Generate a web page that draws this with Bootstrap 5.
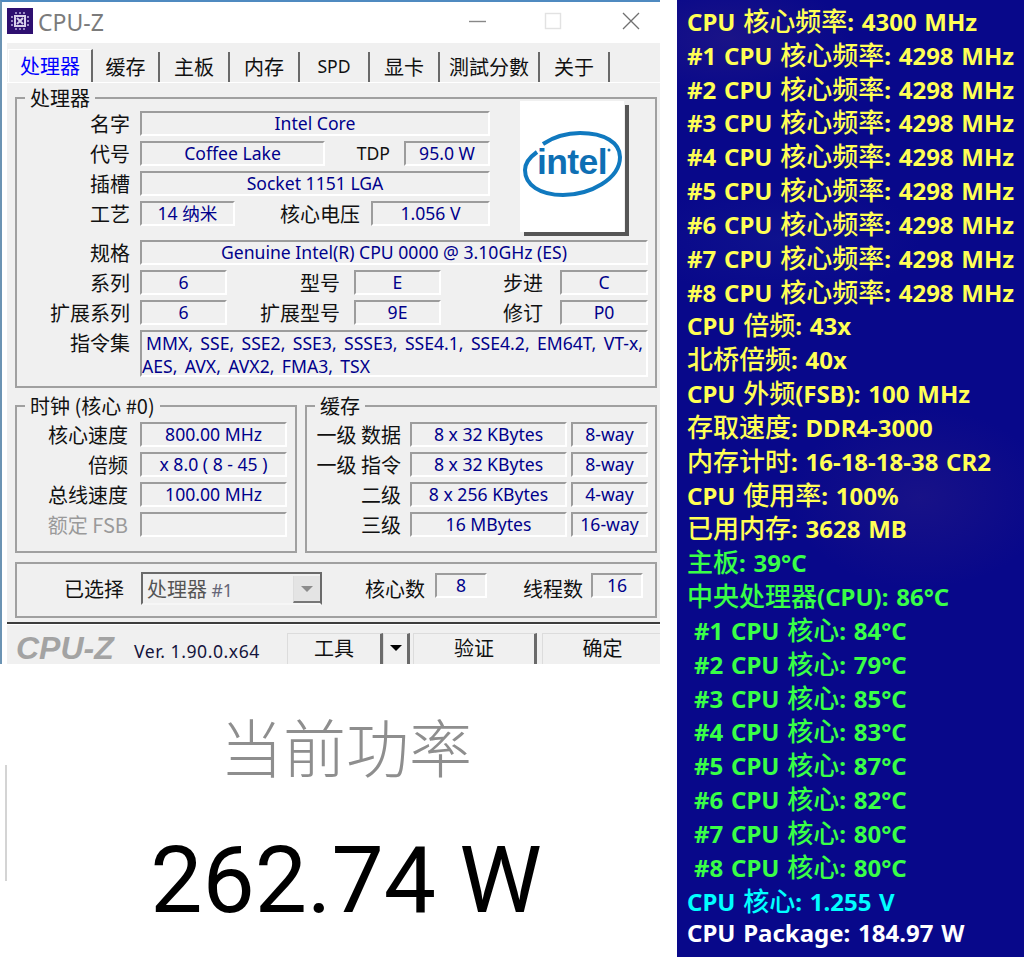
<!DOCTYPE html>
<html lang="zh-CN">
<head>
  <meta charset="UTF-8">
  <meta name="viewport" content="width=device-width, initial-scale=1">
  <title>CPU-Z</title>
  <link href="https://cdn.jsdelivr.net/npm/bootstrap@5.3.0/dist/css/bootstrap.min.css" rel="stylesheet">
  <style>
    html, body { margin: 0; background: #fff; }
    .shot { width: 1024px; height: 957px; overflow: hidden; font-family: "Noto Sans", "Noto Sans CJK SC", sans-serif; }
    .shot-left { width: 660px; flex: none; }
    /* window */
    .cz-win { height: 664px; border-top: 2px solid #4f8ac0; border-left: 2px solid #6b93b3; overflow: hidden; font-size: 17.6px; line-height: 25px; color: #000; }
    .cz-title { height: 41px; padding-left: 5px; }
    .cz-logo { width: 26px; height: 26px; margin-top: 6px; flex: none; }
    .cz-name { font-size: 23px; color: #7b7b7b; margin-left: 5px; padding-top: 2px; line-height: 36px; }
    .cz-ctl { margin-left: auto; }
    .cz-ctl svg { display: block; }
    .cz-tabs { height: 40px; margin-left: 5px; background: #f0f0f0; padding-left: 1px; border-bottom: 1px solid #fff; }
    .cz-tab { height: 30px; margin-top: 9px; border-right: 2px solid #696969; text-align: center; font-size: 20px; line-height: 29px; font-family: "Noto Sans CJK SC", sans-serif; color: #111; }
    .cz-tab-on { height: 33px; margin-top: 6px; width: 85px; background: #f4f4f4; color: #0000ff; border-top: 1px solid #fff; border-left: 1px solid #fff; line-height: 32px; }
    .t2 { width: 67px; } .t3 { width: 70px; } .t4 { width: 70px; } .t5 { width: 70px; } .t6 { width: 70px; } .t7 { width: 100px; } .t8 { width: 70px; }
    .cz-tab.t-latin, .cz-lab.t-latin { font-size: 17.6px; font-family: "Noto Sans", sans-serif; }
    .cz-body { height: 539px; margin-left: 5px; background: #f0f0f0; padding: 14px 3px 0 8px; }
    .cz-grp { position: relative; border: 2px solid #a0a0a0; background: #f0f0f0; }
    .cz-legend { position: absolute; top: -13px; left: 8px; padding: 0 5px; background: #f0f0f0; font-size: 20px; line-height: 24px; white-space: nowrap; font-family: "Noto Sans CJK SC", "Noto Sans", sans-serif; color: #111; }
    .g-proc { height: 291px; padding-top: 2px; }
    .g-top { height: 139px; }
    .g-left { width: 473px; padding-top: 10px; flex: none; }
    .g-logo { margin-left: 30px; flex: none; }
    .g-clock { width: 282px; height: 148px; padding-top: 15px; }
    .g-cache { width: 352px; height: 148px; padding-top: 15px; margin-left: 8px; }
    .g-sel { height: 56px; margin-top: 9px; padding-top: 8px; }
    .g-sel .cz-lab { padding-top: 4px; }
    .g-pair { margin-top: 17px; }
    .cz-row { height: 25px; margin-bottom: 5px; }
    .cz-lab { font-family: "Noto Sans CJK SC", "Noto Sans", sans-serif; font-size: 20px; line-height: 25px; text-align: right; white-space: nowrap; flex: none; color: #111; }
    .cz-off { color: #9a9a9a; }
    .cz-fld { height: 25px; flex: none; border: 2px solid; border-color: #9c9c9c #fff #fff #9c9c9c; color: #00008b; text-align: center; line-height: 21px; white-space: nowrap; font-size: 17.6px; overflow: hidden; }
    .cz-tall { height: 47px; width: 508px; text-align: left; line-height: 23px; word-spacing: 2.8px; text-indent: 4px; }
    /* label and field widths of the processor group */
    .l113 { width: 113px; margin-right: 10px; }
    .f350 { width: 350px; } .f185 { width: 185px; } .f86 { width: 86px; } .f95 { width: 95px; } .f119 { width: 119px; }
    .f508 { width: 508px; } .f87 { width: 87px; } .f88 { width: 88px; }
    .l65 { width: 65px; margin-right: 14px; }
    .l125 { width: 125px; margin-right: 11px; }
    .lm113 { width: 113px; margin-right: 14px; }
    .l102 { width: 102px; margin-right: 17px; }
    /* clock, cache */
    .l111 { width: 111px; margin-right: 12px; }
    .f147 { width: 147px; }
    .l94 { width: 94px; margin-right: 9px; }
    .f157 { width: 157px; } .f77 { width: 77px; margin-left: 4px; }
    /* selection */
    .l107 { width: 107px; margin-right: 17px; }
    .cz-combo { width: 181px; height: 33px; flex: none; border: 2px solid; border-color: #6a6a6a #6a6a6a #f6f6f6 #6a6a6a; padding-left: 4px; font-size: 20px; line-height: 30px; color: #555; position: relative; font-family: "Noto Sans CJK SC", sans-serif; white-space: nowrap; }
    .cz-combo small { font-size: 17.6px; font-family: "Noto Sans", sans-serif; color: #667; }
    .cz-drop { position: absolute; right: 0; top: 2px; width: 27px; height: 27px; border-left: 1px solid #ddd; border-bottom: 2px solid #777; background: #e4e4e4; }
    .cz-tri { width: 0; height: 0; border-style: solid; border-width: 6px 6px 0; }
    .tri-grey { border-color: #8c8c8c transparent transparent; }
    .tri-black { border-color: #000 transparent transparent; }
    .l60a { width: 60px; margin-left: 43px; margin-right: 10px; }
    .l60b { width: 60px; margin-left: 36px; margin-right: 8px; }
    .f52 { width: 52px; margin-top: 1px; }
    /* footer */
    .cz-foot { height: 42px; margin-left: 5px; background: #f0f0f0; border-top: 2px solid #3d3d3d; box-shadow: inset 0 1px 0 #fff; position: relative; overflow: hidden; }
    .cz-brand { flex: none; font-family: "Liberation Sans", sans-serif; font-weight: 700; font-style: italic; font-size: 32px; line-height: 30px; color: #a3a3a3; margin-left: 9px; width: 118px; padding-top: 9px; }
    .cz-ver { flex: none; font-size: 17.6px; color: #14143c; width: 153px; padding-top: 15px; white-space: nowrap; letter-spacing: .55px; }
    .cz-btn { height: 34px; margin-top: 9px; flex: none; background: #f0f0f0; border: 1px solid #dcdcdc; border-right: 3px solid #6a6a6a; text-align: center; font-family: "Noto Sans CJK SC", sans-serif; font-size: 20px; line-height: 28px; color: #111; }
    .b-tool { width: 96px; }
    .b-arrow { width: 27px; margin-right: 3px; }
    .b-ok { width: 124px; margin-right: 5px; }
    .b-end { width: 120px; border-right: 0; }
    .b-arrow .cz-tri { margin: 11px auto 0; }
    /* power readout */
    .pw { height: 293px; position: relative; padding-left: 32px; text-align: center; }
    .pw-bar { position: absolute; left: 5px; top: 101px; width: 2px; height: 116px; background: #d4d4d4; }
    .pw-name { font-family: "Noto Sans CJK SC", sans-serif; font-size: 63px; font-weight: 300; line-height: 70px; color: #8e8e8e; padding-top: 46px; }
    .pw-val { font-family: Roboto, sans-serif; font-size: 93px; line-height: 110px; color: #000; margin-top: 46px; white-space: nowrap; }
    /* sensor list */
    .osd { width: 347px; margin-left: 17px; flex: none; height: 957px; padding: 3px 0 0 10px; font-family: "Noto Sans", "Noto Sans CJK SC", sans-serif; font-weight: 700; font-size: 24px; word-spacing: 1.5px; white-space: nowrap;
      background:
        radial-gradient(ellipse 130px 90px at 70% 52%, rgba(60,40,130,.3), transparent),
        radial-gradient(ellipse 120px 60px at 15% 4%, rgba(60,40,130,.35), transparent),
        radial-gradient(ellipse 140px 60px at 30% 25%, rgba(30,40,150,.3), transparent),
        #08088a; }
    .osd div { height: 33.84px; line-height: 33.84px; }
    .osd span { font-size: 26px; font-weight: 500; font-family: "Noto Sans CJK SC", sans-serif; }
    .c-y { color: #ffff55; }
    .c-g { color: #39ff47; }
    .c-c { color: #00ffff; }
    .c-w { color: #ffffff; }
    .c-i { padding-left: 7px; }
  </style>
</head>
<body>
<div class="shot d-flex">
  <div class="shot-left">
    <div class="cz-win">
      <!-- title bar -->
      <div class="cz-title d-flex bg-white">
        <svg class="cz-logo" viewBox="0 0 26 26">
          <rect width="26" height="26" fill="#2e0f70"/>
          <rect x="8" y="8" width="10" height="10" fill="none" stroke="#d8d0ea" stroke-width="2"/>
          <path d="M10 10l6 6M16 10l-6 6" stroke="#d8d0ea" stroke-width="2"/>
          <path d="M8 5h10M8 21h10M5 8v10M21 8v10" stroke="#b9aedb" stroke-width="1.6" stroke-dasharray="2 2"/>
        </svg>
        <div class="cz-name">CPU-Z</div>
        <svg class="cz-ctl" width="191" height="41" viewBox="0 0 191 41">
          <path d="M0 19.5h17" stroke="#888" stroke-width="1.4"/>
          <rect x="76.5" y="11.5" width="15" height="15" fill="none" stroke="#e2e2e2" stroke-width="1.4"/>
          <path d="M154 11l16 16M170 11l-16 16" stroke="#707070" stroke-width="1.3"/>
        </svg>
      </div>
      <!-- tabs -->
      <div class="cz-tabs d-flex">
        <div class="cz-tab cz-tab-on">处理器</div>
        <div class="cz-tab t2">缓存</div>
        <div class="cz-tab t3">主板</div>
        <div class="cz-tab t4">内存</div>
        <div class="cz-tab t5 t-latin">SPD</div>
        <div class="cz-tab t6">显卡</div>
        <div class="cz-tab t7">測試分數</div>
        <div class="cz-tab t8">关于</div>
      </div>
      <div class="cz-body">
        <!-- processor -->
        <div class="cz-grp g-proc">
          <div class="cz-legend">处理器</div>
          <div class="d-flex g-top">
            <div class="g-left">
              <div class="cz-row d-flex">
                <div class="cz-lab l113">名字</div><div class="cz-fld f350">Intel Core</div>
              </div>
              <div class="cz-row d-flex">
                <div class="cz-lab l113">代号</div><div class="cz-fld f185">Coffee Lake</div>
                <div class="cz-lab l65 t-latin">TDP</div><div class="cz-fld f86">95.0 W</div>
              </div>
              <div class="cz-row d-flex">
                <div class="cz-lab l113">插槽</div><div class="cz-fld f350">Socket 1151 LGA</div>
              </div>
              <div class="cz-row d-flex">
                <div class="cz-lab l113">工艺</div><div class="cz-fld f95">14 纳米</div>
                <div class="cz-lab l125">核心电压</div><div class="cz-fld f119">1.056 V</div>
              </div>
            </div>
            <svg class="g-logo" width="109" height="135" viewBox="0 0 109 135">
              <rect width="104" height="131" fill="#fff"/>
              <path d="M105 4h4v131H4v-4h101z" fill="#565656"/>
              <path d="M23 43C35 35 48 32 60 32C85 32 100 42 100 56C100 78 70 94 43 94C20 94 5 84 5 69C5 62 10 56 17 51" fill="none" stroke="#1079bf" stroke-width="4"/>
              <text x="17" y="73" font-family="Liberation Sans, sans-serif" font-weight="700" font-size="35.5" letter-spacing="-.6" fill="#0e6fb4">intel</text>
              <circle cx="89" cy="49" r="1.5" fill="#0e6fb4"/>
            </svg>
          </div>
          <div class="cz-row d-flex">
            <div class="cz-lab l113">规格</div><div class="cz-fld f508">Genuine Intel(R) CPU 0000 @ 3.10GHz (ES)</div>
          </div>
          <div class="cz-row d-flex">
            <div class="cz-lab l113">系列</div><div class="cz-fld f87">6</div>
            <div class="cz-lab lm113">型号</div><div class="cz-fld f87">E</div>
            <div class="cz-lab l102">步进</div><div class="cz-fld f88">C</div>
          </div>
          <div class="cz-row d-flex">
            <div class="cz-lab l113">扩展系列</div><div class="cz-fld f87">6</div>
            <div class="cz-lab lm113">扩展型号</div><div class="cz-fld f87">9E</div>
            <div class="cz-lab l102">修订</div><div class="cz-fld f88">P0</div>
          </div>
          <div class="d-flex">
            <div class="cz-lab l113">指令集</div>
            <div class="cz-fld cz-tall">MMX, SSE, SSE2, SSE3, SSSE3, SSE4.1, SSE4.2, EM64T, VT-x,<br>AES, AVX, AVX2, FMA3, TSX</div>
          </div>
        </div>
        <div class="d-flex g-pair">
          <!-- clocks -->
          <div class="cz-grp g-clock">
            <div class="cz-legend">时钟 (核心 #0)</div>
            <div class="cz-row d-flex"><div class="cz-lab l111">核心速度</div><div class="cz-fld f147">800.00 MHz</div></div>
            <div class="cz-row d-flex"><div class="cz-lab l111">倍频</div><div class="cz-fld f147">x 8.0 ( 8 - 45 )</div></div>
            <div class="cz-row d-flex"><div class="cz-lab l111">总线速度</div><div class="cz-fld f147">100.00 MHz</div></div>
            <div class="cz-row d-flex"><div class="cz-lab l111 cz-off">额定 FSB</div><div class="cz-fld f147"></div></div>
          </div>
          <!-- cache -->
          <div class="cz-grp g-cache">
            <div class="cz-legend">缓存</div>
            <div class="cz-row d-flex"><div class="cz-lab l94">一级 数据</div><div class="cz-fld f157">8 x 32 KBytes</div><div class="cz-fld f77">8-way</div></div>
            <div class="cz-row d-flex"><div class="cz-lab l94">一级 指令</div><div class="cz-fld f157">8 x 32 KBytes</div><div class="cz-fld f77">8-way</div></div>
            <div class="cz-row d-flex"><div class="cz-lab l94">二级</div><div class="cz-fld f157">8 x 256 KBytes</div><div class="cz-fld f77">4-way</div></div>
            <div class="cz-row d-flex"><div class="cz-lab l94">三级</div><div class="cz-fld f157">16 MBytes</div><div class="cz-fld f77">16-way</div></div>
          </div>
        </div>
        <!-- selection -->
        <div class="cz-grp g-sel d-flex">
          <div class="cz-lab l107">已选择</div>
          <div class="cz-combo">处理器 <small>#1</small>
            <div class="cz-drop d-flex align-items-center justify-content-center"><div class="cz-tri tri-grey"></div></div>
          </div>
          <div class="cz-lab l60a">核心数</div><div class="cz-fld f52">8</div>
          <div class="cz-lab l60b">线程数</div><div class="cz-fld f52">16</div>
        </div>
      </div>
      <!-- footer -->
      <div class="cz-foot d-flex">
        <div class="cz-brand">CPU-Z</div>
        <div class="cz-ver">Ver. 1.90.0.x64</div>
        <div class="cz-btn b-tool">工具</div>
        <div class="cz-btn b-arrow"><div class="cz-tri tri-black"></div></div>
        <div class="cz-btn b-ok">验证</div>
        <div class="cz-btn b-end">确定</div>
      </div>
    </div>
    <!-- power readout -->
    <div class="pw">
      <div class="pw-bar"></div>
      <div class="pw-name">当前功率</div>
      <div class="pw-val">262.74 W</div>
    </div>
  </div>
  <!-- sensor list -->
  <div class="osd">
    <div class="c-y">CPU <span>核心频率</span>: 4300 MHz</div>
    <div class="c-y">#1 CPU <span>核心频率</span>: 4298 MHz</div>
    <div class="c-y">#2 CPU <span>核心频率</span>: 4298 MHz</div>
    <div class="c-y">#3 CPU <span>核心频率</span>: 4298 MHz</div>
    <div class="c-y">#4 CPU <span>核心频率</span>: 4298 MHz</div>
    <div class="c-y">#5 CPU <span>核心频率</span>: 4298 MHz</div>
    <div class="c-y">#6 CPU <span>核心频率</span>: 4298 MHz</div>
    <div class="c-y">#7 CPU <span>核心频率</span>: 4298 MHz</div>
    <div class="c-y">#8 CPU <span>核心频率</span>: 4298 MHz</div>
    <div class="c-y">CPU <span>倍频</span>: 43x</div>
    <div class="c-y"><span>北桥倍频</span>: 40x</div>
    <div class="c-y">CPU <span>外频</span>(FSB): 100 MHz</div>
    <div class="c-y"><span>存取速度</span>: DDR4-3000</div>
    <div class="c-y"><span>内存计时</span>: 16-18-18-38 CR2</div>
    <div class="c-y">CPU <span>使用率</span>: 100%</div>
    <div class="c-y"><span>已用内存</span>: 3628 MB</div>
    <div class="c-g"><span>主板</span>: 39°C</div>
    <div class="c-g"><span>中央处理器</span>(CPU): 86°C</div>
    <div class="c-g c-i">#1 CPU <span>核心</span>: 84°C</div>
    <div class="c-g c-i">#2 CPU <span>核心</span>: 79°C</div>
    <div class="c-g c-i">#3 CPU <span>核心</span>: 85°C</div>
    <div class="c-g c-i">#4 CPU <span>核心</span>: 83°C</div>
    <div class="c-g c-i">#5 CPU <span>核心</span>: 87°C</div>
    <div class="c-g c-i">#6 CPU <span>核心</span>: 82°C</div>
    <div class="c-g c-i">#7 CPU <span>核心</span>: 80°C</div>
    <div class="c-g c-i">#8 CPU <span>核心</span>: 80°C</div>
    <div class="c-c">CPU <span>核心</span>: 1.255 V</div>
    <div class="c-w">CPU Package: 184.97 W</div>
  </div>
</div>
<script src="https://cdn.jsdelivr.net/npm/bootstrap@5.3.0/dist/js/bootstrap.bundle.min.js"></script>
</body>
</html>
